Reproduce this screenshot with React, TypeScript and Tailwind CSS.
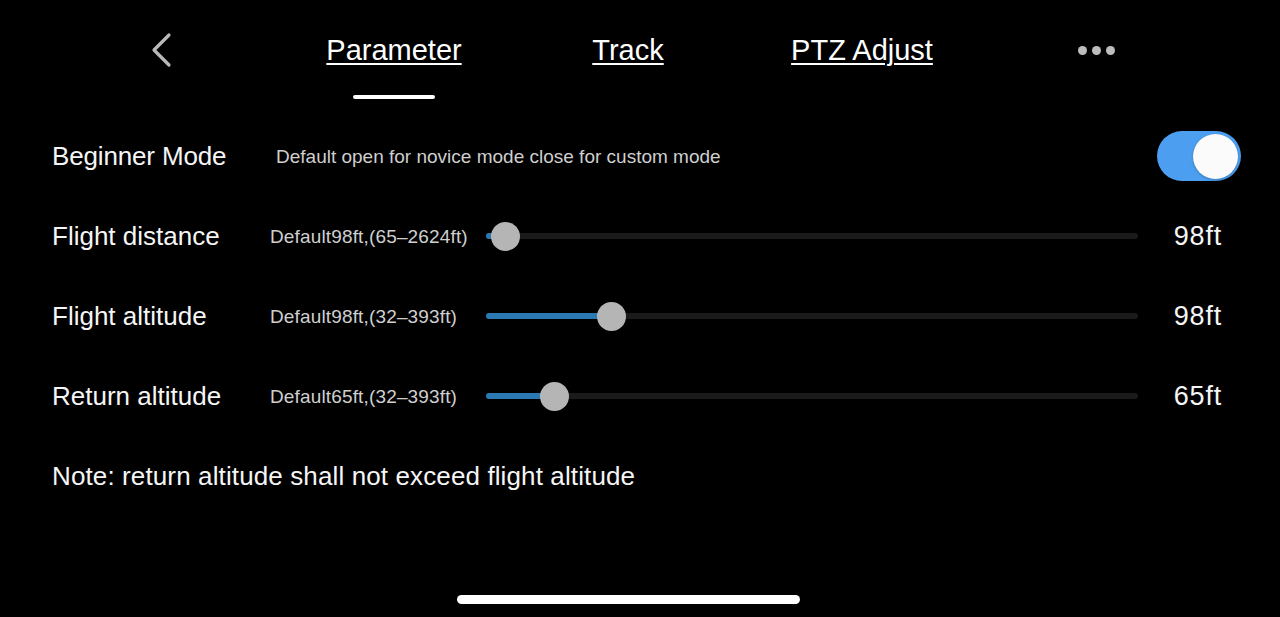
import React from "react";

const font = { fontFamily: '"Liberation Sans", Arial, sans-serif' };

function Slider({ pos }: { pos: number }) {
  return (
    <div className="relative flex h-[30px] w-[652px] items-center">
      <div className="h-[6px] w-full rounded-full bg-[#1a1a1a]" />
      <div
        className="absolute left-0 top-[12px] h-[6px] rounded-full bg-[#2b79b3]"
        style={{ width: pos }}
      />
      <div
        className="absolute top-[0.5px] h-[29px] w-[29px] rounded-full bg-[#b5b5b5]"
        style={{ left: pos - 14.5 }}
      />
    </div>
  );
}

function SliderRow({
  label,
  desc,
  pos,
  value,
}: {
  label: string;
  desc: string;
  pos: number;
  value: string;
}) {
  return (
    <div className="flex h-[80px] items-center pl-[52px]">
      <div className="w-[218px] text-[26px] leading-[26px] text-[#f5f5f5]">{label}</div>
      <div className="w-[216px] text-[19px] leading-[19px] tracking-[0.15px] text-[#cfcfcf]">{desc}</div>
      <Slider pos={pos} />
      <div className="w-[84px] text-right text-[27px] leading-[27px] tracking-[0.8px] text-[#f5f5f5]">{value}</div>
    </div>
  );
}

export default function App() {
  return (
    <div className="relative h-[617px] w-[1280px] overflow-hidden bg-black" style={font}>
      <div className="grid h-[100px] w-[1213px] grid-cols-5 pl-[43px]">
        <div className="flex h-[100px] items-center justify-center">
          <svg width="24" height="36" viewBox="0 0 24 36" fill="none" className="ml-[4px]">
            <path
              d="M19 3 L4 18 L19 33"
              stroke="#b9b9b9"
              strokeWidth="3.2"
              strokeLinecap="round"
              strokeLinejoin="round"
            />
          </svg>
        </div>
        <div className="flex flex-col items-center pt-[36px]">
          <span className="text-[29px] leading-[29px] text-white underline decoration-2 underline-offset-[3px]">
            Parameter
          </span>
          <div className="mt-[30px] h-[4px] w-[82px] rounded-full bg-white" />
        </div>
        <div className="flex flex-col items-center pt-[36px]">
          <span className="text-[29px] leading-[29px] text-white underline decoration-2 underline-offset-[3px]">
            Track
          </span>
        </div>
        <div className="flex flex-col items-center pt-[36px]">
          <span className="text-[29px] leading-[29px] text-white underline decoration-2 underline-offset-[3px]">
            PTZ Adjust
          </span>
        </div>
        <div className="flex h-[100px] items-center justify-center gap-[5px]">
          <div className="h-[9px] w-[9px] rounded-full bg-[#bdbdbd]" />
          <div className="h-[9px] w-[9px] rounded-full bg-[#bdbdbd]" />
          <div className="h-[9px] w-[9px] rounded-full bg-[#bdbdbd]" />
        </div>
      </div>

      <div className="mt-[16px]">
        <div className="flex h-[80px] items-center pl-[52px] pr-[39px]">
          <div className="w-[224px] text-[26px] leading-[26px] tracking-[-0.15px] text-[#f5f5f5]">Beginner Mode</div>
          <div className="flex-1 text-[19px] leading-[19px] text-[#cfcfcf]">
            Default open for novice mode close for custom mode
          </div>
          <div className="flex h-[50px] w-[84px] items-center justify-end rounded-full bg-[#4c9ff0] pr-[3px]">
            <div className="h-[45px] w-[45px] rounded-full bg-[#fbfbfb] shadow-[0_1px_3px_rgba(0,0,0,0.25)]" />
          </div>
        </div>
        <SliderRow label="Flight distance" desc="Default98ft,(65–2624ft)" pos={19} value="98ft" />
        <SliderRow label="Flight altitude" desc="Default98ft,(32–393ft)" pos={125} value="98ft" />
        <SliderRow label="Return altitude" desc="Default65ft,(32–393ft)" pos={68} value="65ft" />
        <div className="flex h-[80px] items-center pl-[52px] text-[26px] leading-[26px] tracking-[0.12px] text-[#f5f5f5]">
          Note: return altitude shall not exceed flight altitude
        </div>
      </div>

      <div className="absolute bottom-[13px] left-[457px] h-[9px] w-[343px] rounded-full bg-white" />
    </div>
  );
}
